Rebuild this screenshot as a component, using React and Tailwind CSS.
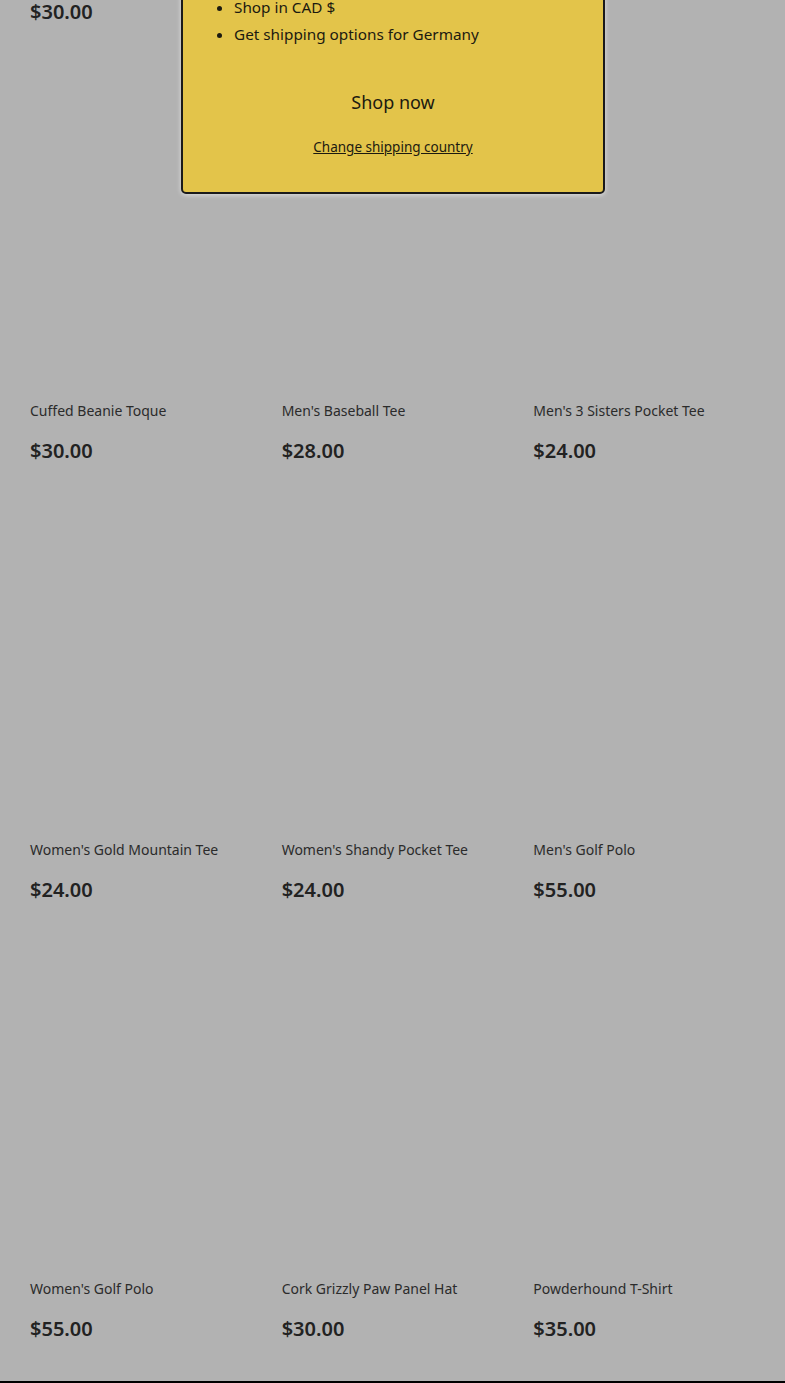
const products = [
  { title: "Women's Shop Tee", price: "$30.00" },
  { title: "Men's Classic Tee", price: "$30.00" },
  { title: "Trucker Hat", price: "$30.00" },
  { title: "Cuffed Beanie Toque", price: "$30.00" },
  { title: "Men's Baseball Tee", price: "$28.00" },
  { title: "Men's 3 Sisters Pocket Tee", price: "$24.00" },
  { title: "Women's Gold Mountain Tee", price: "$24.00" },
  { title: "Women's Shandy Pocket Tee", price: "$24.00" },
  { title: "Men's Golf Polo", price: "$55.00" },
  { title: "Women's Golf Polo", price: "$55.00" },
  { title: "Cork Grizzly Paw Panel Hat", price: "$30.00" },
  { title: "Powderhound T-Shirt", price: "$35.00" },
]

function ProductCard(props) {
  return <div className="flex flex-col pb-6">
    <div className="h-[335px]"></div>
    <div className="mt-4 text-[14px] leading-[20px] text-[#2b2b2b]">{props.title}</div>
    <div className="mt-4 text-[20px] leading-[28px] font-semibold text-[#222]">{props.price}</div>
  </div>
}

function Modal() {
  return <div className="absolute left-[181px] top-[-40px] w-[424px] bg-[#e3c44a] border-2 border-[#1a1a1a] rounded-[5px] shadow-[0_1px_5px_rgba(255,255,255,0.6)] text-[#1c1a10]">
    <ul className="list-disc pl-[51px] pt-[32px] text-[15.3px] leading-[27px]">
      <li>Shop in CAD $</li>
      <li>Get shipping options for Germany</li>
    </ul>
    <div className="mt-[40px] text-center text-[18px] leading-[28px]">Shop now</div>
    <div className="mt-[21px] pb-[35px] text-center text-[13.5px] leading-[20px] underline">Change shipping country</div>
  </div>
}

export default function App() {
  return <div className="relative h-[1383px] overflow-hidden bg-[#b2b2b2] font-['Noto_Sans',sans-serif]">
    <div className="-mt-[389px] px-[30px] grid grid-cols-3 gap-x-[30px]">
      {products.map((p, i) => <ProductCard key={i} title={p.title} price={p.price} />)}
    </div>
    <div className="mt-[14px] h-[40px] bg-black"></div>
    <Modal />
  </div>
}
